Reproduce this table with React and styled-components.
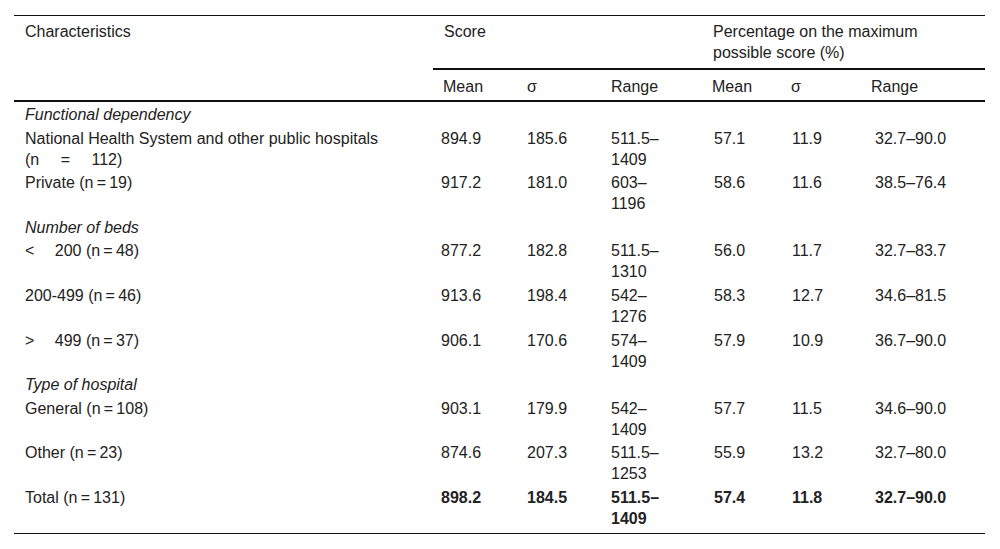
import React from "react";
import styled, { createGlobalStyle } from "styled-components";

const GlobalStyle = createGlobalStyle`
  body {
    margin: 0;
    background: #fff;
    font-family: "Liberation Sans", Arial, sans-serif;
    color: #222;
  }
`;

const Page = styled.div`
  padding: 15px 15px 0 14px;
`;

const StyledTable = styled.table`
  width: 971px;
  border-collapse: collapse;
  border-top: 1px solid #111;
  border-bottom: 1px solid #111;
  font-size: 16px;
  line-height: 21px;
`;

const HeadCell = styled.th`
  text-align: left;
  font-weight: normal;
  vertical-align: top;
  padding: ${(p) => (p.$top ? "5px 10px 5px 11px" : "6px 10px 3px 10px")};
  width: ${(p) => p.$w || "auto"};
  border-bottom: ${(p) => (p.$group ? "2px solid #111" : "none")};
`;

const HeadRow = styled.tr`
  border-bottom: ${(p) => (p.$last ? "2px solid #111" : "none")};
`;

const Row = styled.tr``;

const Cell = styled.td`
  vertical-align: top;
  padding: ${(p) => (p.$last ? "2px 10px 4px" : "2px 10px 0.6px")};
  padding-left: ${(p) => p.$indent || "10px"};
  font-weight: ${(p) => (p.$bold ? "bold" : "normal")};
`;

const LabelCell = styled(Cell)`
  padding-left: 11px;
  font-style: ${(p) => (p.$group ? "italic" : "normal")};
`;

const Spaced = styled.span`
  word-spacing: ${(p) => p.$gap || "0"};
`;

const Thin = "\u2009";

const groups = [
  {
    title: "Functional dependency",
    rows: [
      {
        label: (
          <>
            National Health System and other public hospitals
            <br />
            <Spaced $gap="17px">(n = 112)</Spaced>
          </>
        ),
        v: ["894.9", "185.6", ["511.5–", "1409"], "57.1", "11.9", "32.7–90.0"],
      },
      {
        label: `Private (n${Thin}=${Thin}19)`,
        v: ["917.2", "181.0", ["603–", "1196"], "58.6", "11.6", "38.5–76.4"],
      },
    ],
  },
  {
    title: "Number of beds",
    rows: [
      {
        label: (
          <>
            <Spaced $gap="16px">{"< "}</Spaced>
            {`200 (n${Thin}=${Thin}48)`}
          </>
        ),
        v: ["877.2", "182.8", ["511.5–", "1310"], "56.0", "11.7", "32.7–83.7"],
      },
      {
        label: `200-499 (n${Thin}=${Thin}46)`,
        v: ["913.6", "198.4", ["542–", "1276"], "58.3", "12.7", "34.6–81.5"],
      },
      {
        label: (
          <>
            <Spaced $gap="16px">{"> "}</Spaced>
            {`499 (n${Thin}=${Thin}37)`}
          </>
        ),
        v: ["906.1", "170.6", ["574–", "1409"], "57.9", "10.9", "36.7–90.0"],
      },
    ],
  },
  {
    title: "Type of hospital",
    rows: [
      {
        label: `General (n${Thin}=${Thin}108)`,
        v: ["903.1", "179.9", ["542–", "1409"], "57.7", "11.5", "34.6–90.0"],
      },
      {
        label: `Other (n${Thin}=${Thin}23)`,
        v: ["874.6", "207.3", ["511.5–", "1253"], "55.9", "13.2", "32.7–80.0"],
      },
    ],
  },
];

const total = {
  label: `Total (n${Thin}=${Thin}131)`,
  v: ["898.2", "184.5", ["511.5–", "1409"], "57.4", "11.8", "32.7–90.0"],
};

// small shifts so the data sits where it does under the headers
const indents = ["8px", "10px", "10px", "12px", "11px", "14px"];

const Values = ({ v, bold, last }) =>
  v.map((val, i) => (
    <Cell key={i} $indent={indents[i]} $bold={bold} $last={last}>
      {Array.isArray(val) ? (
        <>
          {val[0]}
          <br />
          {val[1]}
        </>
      ) : (
        val
      )}
    </Cell>
  ));

export default function App() {
  return (
    <Page>
      <GlobalStyle />
      <StyledTable>
        <thead>
          <tr>
            <HeadCell $top rowSpan={2} $w="398px">
              Characteristics
            </HeadCell>
            <HeadCell $top $group colSpan={3}>
              Score
            </HeadCell>
            <HeadCell $top $group colSpan={3}>
              Percentage on the maximum
              <br />
              possible score (%)
            </HeadCell>
          </tr>
          <HeadRow $last>
            <HeadCell $w="64px">Mean</HeadCell>
            <HeadCell $w="64px">σ</HeadCell>
            <HeadCell $w="81px">Range</HeadCell>
            <HeadCell $w="59px">Mean</HeadCell>
            <HeadCell $w="60px">σ</HeadCell>
            <HeadCell>Range</HeadCell>
          </HeadRow>
        </thead>
        <tbody>
          {groups.map((g) => (
            <React.Fragment key={g.title}>
              <Row>
                <LabelCell $group colSpan={7}>
                  {g.title}
                </LabelCell>
              </Row>
              {g.rows.map((r, i) => (
                <Row key={i}>
                  <LabelCell>{r.label}</LabelCell>
                  <Values v={r.v} />
                </Row>
              ))}
            </React.Fragment>
          ))}
          <Row>
            <LabelCell $last>{total.label}</LabelCell>
            <Values v={total.v} bold last />
          </Row>
        </tbody>
      </StyledTable>
    </Page>
  );
}
